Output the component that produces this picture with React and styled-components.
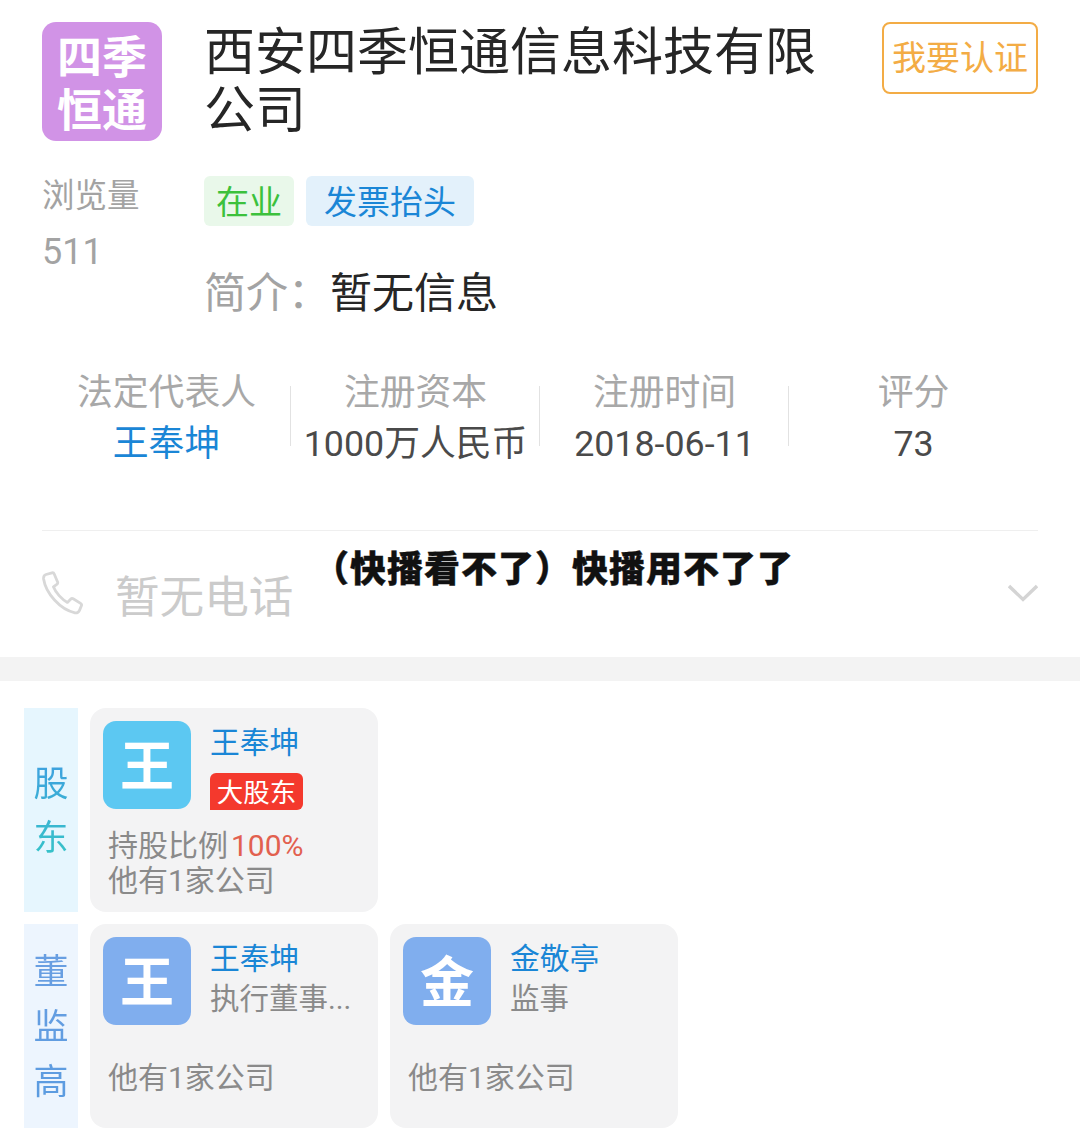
import styled, { createGlobalStyle } from 'styled-components';

const cjk = `Roboto, 'Noto Sans CJK SC', sans-serif`;
const blue = '#1a86d6';
const grey = '#8a8a8a';

const GlobalStyle = createGlobalStyle`
  html, body {
    margin: 0;
    padding: 0;
    background: #fff;
    font-family: ${cjk};
  }

  * {
    box-sizing: border-box;
  }
`;

const Page = styled.div`
  position: relative;
  width: 1080px;
  height: 1137px;
  overflow: hidden;
  background: #fff;
`;

const Summary = styled.section`
  padding: 22px 42px 0;
  height: 657px;
`;

const TopRow = styled.div`
  display: flex;
  align-items: flex-start;
`;

const Logo = styled.div`
  flex: none;
  width: 120px;
  height: 119px;
  border-radius: 14px;
  background: #d193e6;
  color: #fff;
  font-size: 45px;
  font-weight: 700;
  line-height: 53px;
  text-align: center;
  padding-top: 10px;
`;

const Title = styled.h1`
  flex: none;
  width: 632px;
  margin: 2px 0 0 42px;
  font-size: 51px;
  font-weight: 400;
  line-height: 58px;
  color: #262626;
`;

const Claim = styled.button`
  flex: none;
  margin-left: 46px;
  width: 156px;
  height: 72px;
  padding: 0;
  border: 2px solid #f3ac45;
  border-radius: 8px;
  background: #fff;
  color: #f3ac45;
  font-family: ${cjk};
  font-size: 34px;
  line-height: 68px;
`;

const InfoRow = styled.div`
  display: flex;
  margin-top: 35px;
`;

const Views = styled.div`
  flex: none;
  width: 162px;
  color: #a3a3a3;
  font-size: 32.5px;
  line-height: 56px;
  margin-top: -8px;
`;

const ViewCount = styled.span`
  font-size: 36px;
`;

const InfoBody = styled.div`
  display: flex;
  flex-direction: column;
`;

const Tags = styled.div`
  display: flex;
  gap: 12px;
`;

const Tag = styled.span`
  height: 50px;
  padding: 0 ${p => p.$pad}px;
  border-radius: 6px;
  font-size: 33px;
  line-height: 53px;
  color: ${p => p.$color};
  background: ${p => p.$bg};
`;

const Intro = styled.div`
  display: flex;
  align-items: center;
  margin: 33px 0 0;
  height: 60px;
  font-size: 42px;
  color: #262626;
`;

const IntroLabel = styled.span`
  flex: none;
  width: 126px;
  white-space: nowrap;
  color: #a3a3a3;
`;

const Stats = styled.div`
  display: grid;
  grid-template-columns: repeat(4, 1fr);
  margin-top: 49px;
  width: 996px;
`;

const Stat = styled.div`
  position: relative;
  display: flex;
  flex-direction: column;
  align-items: center;
  white-space: nowrap;

  &:not(:last-child)::after {
    content: '';
    position: absolute;
    right: 0;
    top: 18px;
    height: 60px;
    width: 1px;
    background: #e2e2e2;
  }
`;

const StatLabel = styled.div`
  height: 50px;
  font-size: 35.8px;
  line-height: 50px;
  color: #a8a8a8;
`;

const StatValue = styled.div`
  height: 50px;
  font-size: 35.8px;
  line-height: 52px;
  color: ${p => (p.$link ? blue : '#4a4a4a')};
`;

const PhoneRow = styled.div`
  display: flex;
  align-items: center;
  margin-top: 62px;
  height: 127px;
  padding-bottom: 2px;
  border-top: 1px solid #efefef;
  color: #cbcbcb;
  font-size: 44.6px;
`;

const PhoneText = styled.span`
  margin-left: 31px;
  flex: 1;
`;

const Band = styled.div`
  height: 24px;
  background: #f3f3f3;
`;

const Relations = styled.section`
  display: flex;
  flex-direction: column;
  gap: 12px;
  padding: 27px 24px 0;
`;

const RelationRow = styled.div`
  display: flex;
  gap: 12px;
  height: 204px;
`;

const SideLabel = styled.div`
  flex: none;
  width: 54px;
  display: flex;
  align-items: center;
  justify-content: center;
  padding-top: 3px;
  background: ${p => p.$bg};
`;

const SideText = styled.div`
  width: 36px;
  font-size: 35px;
  line-height: ${p => p.$lh}px;
  text-align: center;
  color: transparent;
  background: ${p => p.$gradient};
  -webkit-background-clip: text;
  background-clip: text;
`;

const Card = styled.div`
  flex: none;
  width: 288px;
  padding: 13px 13px 0;
  border-radius: 16px;
  background: #f3f3f4;
`;

const CardTop = styled.div`
  display: flex;
  height: 88px;
`;

const Avatar = styled.div`
  flex: none;
  width: 88px;
  height: 88px;
  border-radius: 13px;
  background: ${p => p.$bg};
  color: #fff;
  font-size: 54px;
  font-weight: 700;
  line-height: 94px;
  text-align: center;
`;

const Person = styled.div`
  margin-left: 20px;
  padding-top: 2px;
  min-width: 0;
`;

const PersonName = styled.div`
  margin-left: -1px;
  font-size: 29.8px;
  line-height: 40px;
  color: ${blue};
`;

const Role = styled.div`
  margin-left: -1px;
  font-size: 29.5px;
  line-height: 40px;
  color: ${grey};
  white-space: nowrap;
`;

const HolderBadge = styled.div`
  width: 93px;
  height: 37px;
  margin: 10px 0 0 -1px;
  border-radius: 6px 6px 6px 0;
  background: #f4392d;
  color: #fff;
  font-size: 26.5px;
  line-height: 40px;
  text-align: center;
`;

const CardLines = styled.div`
  margin: ${p => p.$top}px 0 0 5px;
  font-size: 30px;
  line-height: 35px;
  color: ${grey};
  white-space: nowrap;
`;

const Percent = styled.span`
  margin-left: 3px;
  color: #e2604f;
`;

const Caption = styled.div`
  position: absolute;
  left: 313px;
  top: 540px;
  font-family: 'Noto Sans CJK SC', sans-serif;
  font-size: 36px;
  font-weight: 900;
  letter-spacing: 1px;
  line-height: 52px;
  color: #111;
  -webkit-text-stroke: 0.4px #111;
  white-space: nowrap;
`;

const stats = [
  { label: '法定代表人', value: '王奉坤', link: true },
  { label: '注册资本', value: '1000万人民币' },
  { label: '注册时间', value: '2018-06-11' },
  { label: '评分', value: '73' },
];

function PhoneIcon() {
  return (
    <svg width="42" height="44" viewBox="0 0 42 44" fill="none" stroke="#d8d8d8" strokeWidth="2.8" strokeLinejoin="round">
      <path d="M4 3.5 L10 1.8 C11 1.5 11.8 2 12.2 3 L15.6 11 C16 12 15.6 12.8 14.8 13.4 L11.4 15.8 C13.6 21.6 19.8 28.4 25.4 31.4 L28.6 28.2 C29.4 27.4 30.2 27.2 31.2 27.8 L38.6 32.4 C39.6 33 39.8 33.8 39.4 34.8 L37.4 39.6 C36.8 41.2 35 42.4 33 41.8 C18 38.6 3.8 22.2 1.6 8 C1.4 5.8 2.4 4 4 3.5 Z" />
    </svg>
  );
}

function ChevronIcon() {
  return (
    <svg width="30" height="18" viewBox="0 0 30 18" fill="none" stroke="#d4d4d4" strokeWidth="3.4">
      <path d="M1 2 L15 15.5 L29 2" />
    </svg>
  );
}

export default function App() {
  return (
    <Page>
      <GlobalStyle />
      <Summary>
        <TopRow>
          <Logo>四季<br />恒通</Logo>
          <Title>西安四季恒通信息科技有限公司</Title>
          <Claim>我要认证</Claim>
        </TopRow>

        <InfoRow>
          <Views>浏览量<br /><ViewCount>511</ViewCount></Views>
          <InfoBody>
            <Tags>
              <Tag $pad={12} $color="#3cc13c" $bg="#e9f8ea">在业</Tag>
              <Tag $pad={18} $color={blue} $bg="#e3f1fb">发票抬头</Tag>
            </Tags>
            <Intro>
              <IntroLabel>简介：</IntroLabel>
              暂无信息
            </Intro>
          </InfoBody>
        </InfoRow>

        <Stats>
          {stats.map(s => (
            <Stat key={s.label}>
              <StatLabel>{s.label}</StatLabel>
              <StatValue $link={s.link}>{s.value}</StatValue>
            </Stat>
          ))}
        </Stats>

        <PhoneRow>
          <PhoneIcon />
          <PhoneText>暂无电话</PhoneText>
          <ChevronIcon />
        </PhoneRow>
      </Summary>

      <Band />

      <Relations>
        <RelationRow>
          <SideLabel $bg="#e6f6fe">
            <SideText $lh={54} $gradient="linear-gradient(180deg, #3f9fe0, #35c6c6)">股东</SideText>
          </SideLabel>
          <Card>
            <CardTop>
              <Avatar $bg="#5cc8f2">王</Avatar>
              <Person>
                <PersonName>王奉坤</PersonName>
                <HolderBadge>大股东</HolderBadge>
              </Person>
            </CardTop>
            <CardLines $top={19}>
              持股比例<Percent>100%</Percent><br />他有1家公司
            </CardLines>
          </Card>
        </RelationRow>

        <RelationRow>
          <SideLabel $bg="#edf5fe">
            <SideText $lh={55} $gradient="linear-gradient(180deg, #6a9fe2, #5a9be0)">董监高</SideText>
          </SideLabel>
          <Card>
            <CardTop>
              <Avatar $bg="#80aeee">王</Avatar>
              <Person>
                <PersonName>王奉坤</PersonName>
                <Role>执行董事...</Role>
              </Person>
            </CardTop>
            <CardLines $top={35}>他有1家公司</CardLines>
          </Card>
          <Card>
            <CardTop>
              <Avatar $bg="#80aeee">金</Avatar>
              <Person>
                <PersonName>金敬亭</PersonName>
                <Role>监事</Role>
              </Person>
            </CardTop>
            <CardLines $top={35}>他有1家公司</CardLines>
          </Card>
        </RelationRow>
      </Relations>

      <Caption>（快播看不了）快播用不了了</Caption>
    </Page>
  );
}
